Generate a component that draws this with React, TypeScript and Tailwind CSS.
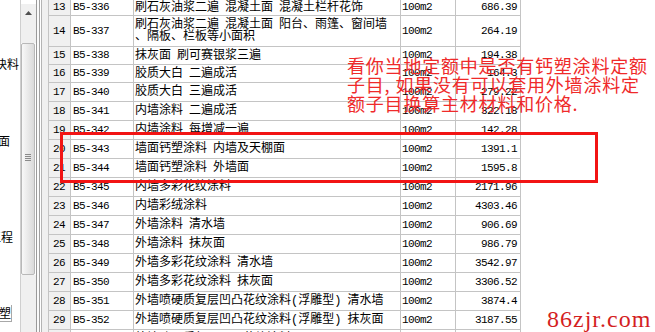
import React from 'react';

interface QuotaRow {
  n: number;
  code: string;
  name: string[];
  price: string;
  h: string;
}

const rows: QuotaRow[] = [
  { n: 13, code: 'B5-336', name: ['刷石灰油浆二遍 混凝土面 混凝土栏杆花饰'], price: '686.39', h: 'h-[16px]' },
  { n: 14, code: 'B5-337', name: ['刷石灰油浆二遍 混凝土面 阳台、雨篷、窗间墙', '、隔板、栏板等小面积'], price: '264.19', h: 'h-[31px]' },
  { n: 15, code: 'B5-338', name: ['抹灰面 刷可赛银浆三遍'], price: '194.38', h: 'h-[18px]' },
  { n: 16, code: 'B5-339', name: ['胶质大白 二遍成活'], price: '164.3', h: 'h-[18px]' },
  { n: 17, code: 'B5-340', name: ['胶质大白 三遍成活'], price: '279.22', h: 'h-[19px]' },
  { n: 18, code: 'B5-341', name: ['内墙涂料 二遍成活'], price: '322.18', h: 'h-[19px]' },
  { n: 19, code: 'B5-342', name: ['内墙涂料 每增减一遍'], price: '142.28', h: 'h-[19px]' },
  { n: 20, code: 'B5-343', name: ['墙面钙塑涂料 内墙及天棚面'], price: '1391.1', h: 'h-[19px]' },
  { n: 21, code: 'B5-344', name: ['墙面钙塑涂料 外墙面'], price: '1595.8', h: 'h-[19px]' },
  { n: 22, code: 'B5-345', name: ['内墙多彩花纹涂料'], price: '2171.96', h: 'h-[19px]' },
  { n: 23, code: 'B5-346', name: ['内墙彩绒涂料'], price: '4303.46', h: 'h-[19px]' },
  { n: 24, code: 'B5-347', name: ['外墙涂料 清水墙'], price: '906.69', h: 'h-[19px]' },
  { n: 25, code: 'B5-348', name: ['外墙涂料 抹灰面'], price: '986.79', h: 'h-[19px]' },
  { n: 26, code: 'B5-349', name: ['外墙多彩花纹涂料 清水墙'], price: '3542.97', h: 'h-[19px]' },
  { n: 27, code: 'B5-350', name: ['外墙多彩花纹涂料 抹灰面'], price: '3306.52', h: 'h-[19px]' },
  { n: 28, code: 'B5-351', name: ['外墙喷硬质复层凹凸花纹涂料(浮雕型) 清水墙'], price: '3874.4', h: 'h-[19px]' },
  { n: 29, code: 'B5-352', name: ['外墙喷硬质复层凹凸花纹涂料(浮雕型) 抹灰面'], price: '3187.55', h: 'h-[19px]' },
  { n: 30, code: 'B5-353', name: ['外墙喷硬质复层凹凸花纹涂料'], price: '3000.00', h: 'h-[19px]' },
];

const mono = "font-['Liberation_Mono',monospace] text-[11px] tracking-[-0.6px]";

export default function App() {
  return (
    <div className="relative w-[655px] h-[332px] overflow-hidden bg-white flex text-black font-['Noto_Sans_CJK_SC',sans-serif]">
      {/* tree panel, scrolled sideways */}
      <div className="w-[20px] h-full overflow-hidden flex flex-col text-[12px] leading-[14px] whitespace-nowrap">
        <div className="mt-[57px] h-[14px] ml-[-5px]">块料</div>
        <div className="mt-[63px] h-[14px] ml-[-2px]">面</div>
        <div className="mt-[82px] h-[14px] ml-[-11px]">工程</div>
        <div className="mt-[61px] h-[17px] w-[14px] ml-[-2px] pl-[1px] pt-[1px] border-r border-b border-[#a8a8a8]">塑</div>
      </div>

      {/* scrollbar */}
      <div className="w-[16px] h-full border-l border-[#cfcfcf] flex flex-col">
        <div className="h-[4px] bg-white" />
        <div className="h-[18px] bg-[#f0f0f0] flex items-center justify-center">
          <svg width="7" height="4" viewBox="0 0 7 4">
            <path d="M3.5 0 L7 4 L0 4 Z" fill="#505050" />
          </svg>
        </div>
        <div className="h-[21px] bg-[#f0f0f0]" />
        <div className="h-[232px] mr-[1px] border border-[#b8b8b8] rounded-[2px] bg-gradient-to-r from-[#f8f8f8] to-[#dadada] flex flex-col items-center pt-[110px]">
          <div className="w-[6px] flex flex-col gap-[1px]">
            <div className="h-[1px] bg-[#8a8a8a]" />
            <div className="h-[1px] bg-[#8a8a8a]" />
            <div className="h-[1px] bg-[#8a8a8a]" />
            <div className="h-[1px] bg-[#8a8a8a]" />
          </div>
        </div>
        <div className="flex-1 bg-[#f0f0f0]" />
      </div>

      {/* splitter */}
      <div className="w-[12px] h-full flex">
        <div className="w-[1px] bg-[#9a9a9a]" />
        <div className="w-[2px] bg-[#fafafa]" />
        <div className="w-[1px] bg-[#a0a0a0]" />
        <div className="w-[1px] bg-white" />
        <div className="w-[1px] bg-[#b4b4b4]" />
        <div className="flex-1 bg-[#f0f0f0]" />
      </div>

      {/* quota grid */}
      <div className="w-[473px] h-full border-l border-[#c4c4c4] flex flex-col overflow-hidden">
        {rows.map((r) => (
          <div key={r.n} className={`${r.h} shrink-0 flex border-b border-[#c4c4c4]`}>
            <div className={`w-[22px] border-r border-[#c4c4c4] bg-[#f0f0f0] pl-[4px] flex items-center ${mono}`}>{r.n}</div>
            <div className={`w-[63px] border-r border-[#c4c4c4] pl-[2px] flex items-center ${mono}`}>{r.code}</div>
            <div className="w-[267px] border-r border-[#c4c4c4] pl-[1px] flex flex-col justify-center text-[12px] leading-[12px] whitespace-nowrap overflow-hidden font-['Liberation_Mono','Noto_Sans_CJK_SC',monospace] [word-spacing:-1.2px]">
              {r.name.map((line, i) => (
                <div key={i}>{line}</div>
              ))}
            </div>
            <div className={`w-[55px] border-r border-[#c4c4c4] pl-[1px] flex items-center ${mono}`}>100m2</div>
            <div className={`w-[65px] border-r border-[#c4c4c4] pr-[3px] flex items-center justify-end ${mono}`}>{r.price}</div>
          </div>
        ))}
      </div>

      {/* red annotation drawn over the grid */}
      <div className="absolute left-[60px] top-[132px] w-[538px] h-[51px] border-[3px] border-[#f21414]" />
      <div className="absolute left-[347px] top-[56px] text-[18px] leading-[19px] tracking-[0.8px] text-[#ef2a2a] whitespace-nowrap">
        <div>看你当地定额中是否有钙塑涂料定额</div>
        <div>
          子目<span className="mr-[5px]">,</span>如果没有可以套用外墙涂料定
        </div>
        <div>额子目换算主材材料和价格.</div>
      </div>
      <div className="absolute left-[547px] top-[307px] text-[24px] leading-[24px] tracking-[1px] text-[#d41f1f] font-['Liberation_Serif',serif] whitespace-nowrap">
        86zjr.com
      </div>
    </div>
  );
}
